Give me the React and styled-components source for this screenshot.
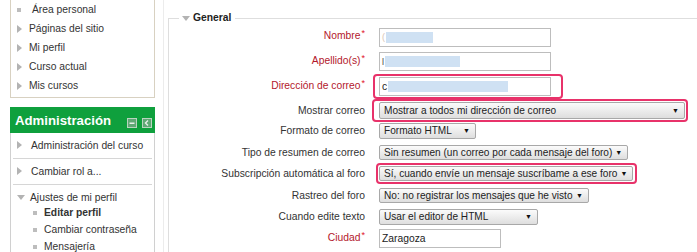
import React from "react";
import styled, { createGlobalStyle } from "styled-components";

const GlobalStyle = createGlobalStyle`
  body {
    margin: 0;
    background: #fff;
    font-family: "Liberation Sans", Arial, sans-serif;
    font-size: 10.3px;
    color: #333;
    overflow: hidden;
  }
  * { box-sizing: border-box; }
`;

const Page = styled.div`
  display: flex;
  width: 697px;
  height: 252px;
  overflow: hidden;
`;

const Side = styled.div`
  width: 155px;
  padding-left: 10px;
  flex-shrink: 0;
`;

const NavBlock = styled.div`
  border: 1px solid #d8d1c1;
  border-top: none;
  padding-bottom: 2px;
`;

const NavItem = styled.div`
  height: 19px;
  display: flex;
  align-items: center;
  padding-left: 6px;
  white-space: nowrap;
`;

const Bullet = styled.span`
  flex-shrink: 0;
  display: inline-block;
  ${(p) =>
    p.$kind === "square" &&
    `width: 4px; height: 4px; background: #bdbdbd; margin-right: ${p.$gap || 11}px;`}
  ${(p) =>
    p.$kind === "right" &&
    `width: 0; height: 0; border-top: 4px solid transparent; border-bottom: 4px solid transparent;
     border-left: 5px solid #b3b3b3; margin-right: ${p.$gap || 7}px;`}
  ${(p) =>
    p.$kind === "down" &&
    `width: 0; height: 0; border-left: 4px solid transparent; border-right: 4px solid transparent;
     border-top: 5px solid #b3b3b3; margin-right: ${p.$gap || 5}px;`}
`;

const AdminBlock = styled.div`
  margin-top: 9px;
`;

const AdminHeader = styled.div`
  height: 26px;
  background: #0fa03d;
  display: flex;
  align-items: center;
  padding: 0 3px 0 5px;
  color: #fff;
  font-weight: bold;
  font-size: 13.2px;
`;

const HeaderTitle = styled.span`
  flex: 1;
`;

const HeaderIcons = styled.div`
  display: flex;
  gap: 5px;
  padding-top: 5px;
`;

const AdminBody = styled.div`
  border-left: 1px solid #d0d0d0;
  border-right: 1px solid #d0d0d0;
  padding: 0 2px;
  height: 130px;
`;

const AdminItem = styled.div`
  display: flex;
  align-items: center;
  height: ${(p) => (p.$divider ? 26 : 19)}px;
  padding: ${(p) => (p.$divider ? "5px 0 6px 4px" : "5px 0 0 4px")};
  border-bottom: ${(p) => (p.$divider ? "1px solid #d6d6d6" : "none")};
  white-space: nowrap;
`;

const SubItem = styled.div`
  display: flex;
  align-items: center;
  height: 17px;
  padding-left: 20px;
  white-space: nowrap;
  font-weight: ${(p) => (p.$bold ? "bold" : "normal")};
`;

const Main = styled.div`
  flex: 1;
  margin-left: 8px;
  border-left: 1px solid #ececec;
  padding: 11px 0 0 4px;
`;

const Fieldset = styled.fieldset`
  margin: 0 -20px 0 0;
  padding: 0;
  border: 1px solid #dedede;
  border-right: none;
  border-bottom: none;
  height: 260px;
`;

const Legend = styled.legend`
  margin-left: 10px;
  padding: 0 4px 0 3px;
  display: flex;
  align-items: center;
  font-weight: bold;
  color: #222;
  line-height: 14px;
`;

const Row = styled.div`
  display: grid;
  grid-template-columns: 196px auto;
  column-gap: 14px;
  align-items: center;
  height: ${(p) => p.$h}px;
`;

const Label = styled.div`
  text-align: right;
  white-space: nowrap;
  color: ${(p) => (p.$required ? "#b3172b" : "#333")};
  padding-bottom: ${(p) => (p.$raise ? 5 : 0)}px;
`;

const Star = styled.span`
  color: #e0102a;
  font-size: 9px;
  vertical-align: 3px;
  margin-left: 1px;
`;

const Controls = styled.div`
  display: flex;
  justify-content: flex-start;
`;

const Highlight = styled.div`
  border: 2px solid #e8326a;
  border-radius: 4px;
  padding: ${(p) => p.$pad};
  margin-left: ${(p) => p.$shift}px;
  display: flex;
`;

const TextBox = styled.div`
  width: ${(p) => p.$w}px;
  height: 19px;
  border: 1px solid #bdbdbd;
  display: flex;
  align-items: center;
  padding-left: 2px;
  white-space: nowrap;
  color: #222;
  font-size: 10.3px;
`;

const Lead = styled.span`
  color: ${(p) => p.$c || "#444"};
  font-size: 9px;
`;

const Blur = styled.span`
  display: inline-block;
  width: ${(p) => p.$w}px;
  height: 11px;
  margin-left: ${(p) => p.$ml || 1}px;
  background: #cfe1f3;
`;

const SelectBox = styled.div`
  width: ${(p) => p.$w}px;
  height: ${(p) => p.$h || 16}px;
  border: 1px solid #a8a8a8;
  border-radius: 2px;
  background: linear-gradient(#fbfbfb, #dedede);
  display: flex;
  align-items: center;
  padding: 0 4px 0 4px;
  white-space: nowrap;
  color: #222;
  font-size: 10.1px;
`;

const SelectText = styled.span`
  flex: 1;
`;

const Arrow = styled.span`
  font-size: 7px;
  color: #111;
  margin-left: 3px;
  margin-right: 1px;
`;

const HeaderIcon = ({ kind }) => (
  <svg width="10" height="10" viewBox="0 0 10 10">
    <rect x="0.5" y="0.5" width="9" height="9" fill="#5fa874" stroke="#b9d4bf" />
    {kind === "min" ? (
      <rect x="2.5" y="4.5" width="5" height="1.5" fill="#e8efe9" />
    ) : (
      <path d="M6 2.5 L3.5 5 L6 7.5" fill="none" stroke="#e8efe9" strokeWidth="1.4" />
    )}
  </svg>
);

const Select = ({ w, h, children }) => (
  <SelectBox $w={w} $h={h}>
    <SelectText>{children}</SelectText>
    <Arrow>▼</Arrow>
  </SelectBox>
);

const nav = [
  { text: "Área personal", kind: "square" },
  { text: "Páginas del sitio", kind: "right" },
  { text: "Mi perfil", kind: "right" },
  { text: "Curso actual", kind: "right" },
  { text: "Mis cursos", kind: "right" },
];

export default function App() {
  return (
    <>
      <GlobalStyle />
      <Page>
        <Side>
          <NavBlock>
            {nav.map((n) => (
              <NavItem key={n.text}>
                <Bullet $kind={n.kind} />
                {n.text}
              </NavItem>
            ))}
          </NavBlock>

          <AdminBlock>
            <AdminHeader>
              <HeaderTitle>Administración</HeaderTitle>
              <HeaderIcons>
                <HeaderIcon kind="min" />
                <HeaderIcon kind="dock" />
              </HeaderIcons>
            </AdminHeader>
            <AdminBody>
              <AdminItem $divider>
                <Bullet $kind="right" $gap={9} />
                Administración del curso
              </AdminItem>
              <AdminItem $divider>
                <Bullet $kind="right" $gap={9} />
                Cambiar rol a...
              </AdminItem>
              <AdminItem>
                <Bullet $kind="down" $gap={5} />
                Ajustes de mi perfil
              </AdminItem>
              <SubItem $bold>
                <Bullet $kind="square" $gap={7} />
                Editar perfil
              </SubItem>
              <SubItem>
                <Bullet $kind="square" $gap={7} />
                Cambiar contraseña
              </SubItem>
              <SubItem>
                <Bullet $kind="square" $gap={7} />
                Mensajería
              </SubItem>
            </AdminBody>
          </AdminBlock>
        </Side>

        <Main>
          <Fieldset>
            <Legend>
              <Bullet $kind="down" $gap={3} />
              General
            </Legend>

            <Row $h={24.5}>
              <Label $required $raise>
                Nombre<Star>*</Star>
              </Label>
              <Controls>
                <TextBox $w={172}>
                  <Lead $c="#d8c4b4">(</Lead>
                  <Blur $w={47} $ml={0} />
                </TextBox>
              </Controls>
            </Row>
            <Row $h={24.5}>
              <Label $required $raise>
                Apellido(s)<Star>*</Star>
              </Label>
              <Controls>
                <TextBox $w={172}>
                  <Lead>l</Lead>
                  <Blur $w={75} />
                </TextBox>
              </Controls>
            </Row>
            <Row $h={24.5}>
              <Label $required $raise>
                Dirección de correo<Star>*</Star>
              </Label>
              <Controls>
                <Highlight $pad="1px 10px 1px 4px" $shift={-6}>
                  <TextBox $w={172}>
                    <span>c</span>
                    <Blur $w={120} $ml={1} />
                  </TextBox>
                </Highlight>
              </Controls>
            </Row>

            <Row $h={21.5}>
              <Label>Mostrar correo</Label>
              <Controls>
                <Highlight $pad="1px 1px 1px 5px" $shift={-7}>
                  <Select w={306} h={17}>
                    Mostrar a todos mi dirección de correo
                  </Select>
                </Highlight>
              </Controls>
            </Row>
            <Row $h={21.5}>
              <Label>Formato de correo</Label>
              <Controls>
                <Select w={97}>Formato HTML</Select>
              </Controls>
            </Row>
            <Row $h={21.5}>
              <Label>Tipo de resumen de correo</Label>
              <Controls>
                <Select w={249} h={15}>
                  Sin resumen (un correo por cada mensaje del foro)
                </Select>
              </Controls>
            </Row>
            <Row $h={21.5}>
              <Label>Subscripción automática al foro</Label>
              <Controls>
                <Highlight $pad="1px 2px 1px 1px" $shift={-3}>
                  <Select w={254} h={15}>
                    Sí, cuando envíe un mensaje suscríbame a ese foro
                  </Select>
                </Highlight>
              </Controls>
            </Row>
            <Row $h={21.5}>
              <Label>Rastreo del foro</Label>
              <Controls>
                <Select w={210} h={15}>
                  No: no registrar los mensajes que he visto
                </Select>
              </Controls>
            </Row>
            <Row $h={21.5}>
              <Label>Cuando edite texto</Label>
              <Controls>
                <Select w={159}>Usar el editor de HTML</Select>
              </Controls>
            </Row>
            <Row $h={22}>
              <Label $required $raise>
                Ciudad<Star>*</Star>
              </Label>
              <Controls>
                <TextBox $w={122}>Zaragoza</TextBox>
              </Controls>
            </Row>
          </Fieldset>
        </Main>
      </Page>
    </>
  );
}
